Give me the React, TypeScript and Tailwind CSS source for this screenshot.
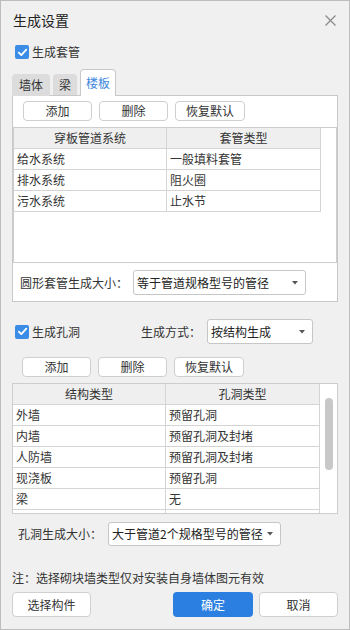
import React from "react";

const font = { fontFamily: '"Noto Sans CJK SC", "Noto Sans", sans-serif' };

function Check() {
  return (
    <span className="flex h-[14px] w-[14px] items-center justify-center rounded-[2px] bg-[#3a8ce6]">
      <svg width="11" height="11" viewBox="0 0 11 11">
        <path d="M1.8 5.6 L4.3 8.1 L9.3 2.6" fill="none" stroke="#fff" strokeWidth="1.8" strokeLinecap="round" strokeLinejoin="round" />
      </svg>
    </span>
  );
}

function Btn({ children, className = "" }: { children: React.ReactNode; className?: string }) {
  return (
    <div className={"flex items-center justify-center rounded-[4px] border border-[#cfcfcf] bg-white text-[12px] leading-none text-[#333] " + className}>
      {children}
    </div>
  );
}

function Select({ text, className = "" }: { text: string; className?: string }) {
  return (
    <div className={"flex items-center justify-between rounded-[3px] border border-[#c6c6c6] bg-white pl-[3px] pr-[7px] text-[12px] leading-none text-[#222] " + className}>
      <span>{text}</span>
      <svg width="6" height="4" viewBox="0 0 6 4">
        <path d="M0 0 L6 0 L3 3.5 Z" fill="#555" />
      </svg>
    </div>
  );
}

function Row({ a, b, header = false }: { a: string; b: string; header?: boolean }) {
  return (
    <div className={"flex h-[21px] border-b border-[#d4d4d4] text-[12px] leading-none text-[#333] " + (header ? "bg-[#efefef]" : "bg-white")}>
      <div className={"flex w-[153px] items-center border-r border-[#d4d4d4] " + (header ? "justify-center" : "pl-[3px]")}>{a}</div>
      <div className={"flex flex-1 items-center border-r border-[#d4d4d4] " + (header ? "justify-center" : "pl-[3px]")}>{b}</div>
    </div>
  );
}

export default function App() {
  return (
    <div style={font} className="box-border flex h-[630px] w-[350px] flex-col border border-[#bdbdbd] bg-[#f0f0f0] px-[11px] text-[#333]">
      {/* header */}
      <div className="flex h-[38px] items-center justify-between">
        <span className="pl-[1px] text-[14px] leading-none text-[#222]">生成设置</span>
        <svg width="11" height="11" viewBox="0 0 11 11" className="mr-[2px]">
          <path d="M0.5 0.5 L10.5 10.5 M10.5 0.5 L0.5 10.5" stroke="#8a8a8a" strokeWidth="1.3" />
        </svg>
      </div>
      {/* checkbox 1 */}
      <div className="flex h-[26px] items-center gap-[3px] pl-[3px]">
        <Check />
        <span className="text-[12px] leading-none">生成套管</span>
      </div>
      {/* tabs */}
      <div className="relative z-10 mt-[4px] flex h-[27px] items-end gap-[3px]">
        <div className="flex h-[22px] w-[38px] items-center justify-center rounded-t-[4px] bg-[#dcdcdc] text-[12px] leading-none">墙体</div>
        <div className="mb-px flex h-[21px] w-[24px] items-center justify-center rounded-t-[4px] bg-[#dcdcdc] text-[12px] leading-none">梁</div>
        <div className="flex h-[27px] w-[36px] items-center justify-center rounded-t-[4px] border border-b-0 border-[#c8c8c8] bg-white pb-[1px] text-[12px] leading-none text-[#3b87dd]">楼板</div>
      </div>
      {/* panel */}
      <div className="-mt-px flex h-[207px] flex-col border border-[#c8c8c8] bg-white">
        <div className="mt-[5px] flex gap-[7px] pl-[10px]">
          <Btn className="h-[20px] w-[69px]">添加</Btn>
          <Btn className="h-[20px] w-[69px]">删除</Btn>
          <Btn className="h-[20px] w-[70px]">恢复默认</Btn>
        </div>
        <div className="mt-[6px] h-[136px] border border-[#cdcdcd] bg-white">
          <div className="w-[307px]">
            <Row a="穿板管道系统" b="套管类型" header />
            <Row a="给水系统" b="一般填料套管" />
            <Row a="排水系统" b="阻火圈" />
            <Row a="污水系统" b="止水节" />
          </div>
        </div>
        <div className="mt-[7px] flex h-[25px] items-center pl-[7px]">
          <span className="w-[113px] text-[12px] leading-none">圆形套管生成大小：</span>
          <Select text="等于管道规格型号的管径" className="h-[25px] w-[173px]" />
        </div>
      </div>
      {/* checkbox 2 */}
      <div className="mt-[17px] flex h-[25px] items-center">
        <div className="flex items-center gap-[3px] pl-[3px]">
          <Check />
          <span className="text-[12px] leading-none">生成孔洞</span>
        </div>
        <span className="ml-[61px] w-[66px] text-[12px] leading-none">生成方式：</span>
        <Select text="按结构生成" className="h-[25px] w-[106px]" />
      </div>
      {/* buttons 2 */}
      <div className="mt-[13px] flex gap-[7px] pl-[10px]">
        <Btn className="h-[20px] w-[69px]">添加</Btn>
        <Btn className="h-[20px] w-[69px]">删除</Btn>
        <Btn className="h-[20px] w-[70px]">恢复默认</Btn>
      </div>
      {/* table 2 */}
      <div className="mt-[6px] flex h-[131px] w-[326px] overflow-hidden border border-[#cdcdcd] bg-white">
        <div className="w-[307px] overflow-hidden">
          <Row a="结构类型" b="孔洞类型" header />
          <Row a="外墙" b="预留孔洞" />
          <Row a="内墙" b="预留孔洞及封堵" />
          <Row a="人防墙" b="预留孔洞及封堵" />
          <Row a="现浇板" b="预留孔洞" />
          <Row a="梁" b="无" />
          <Row a="" b="" />
        </div>
        <div className="flex flex-1 justify-center pt-[14px]">
          <div className="h-[72px] w-[8px] rounded-full bg-[#c8c8c8]" />
        </div>
      </div>
      {/* hole size */}
      <div className="mt-[8px] flex h-[24px] items-center pl-[6px]">
        <span className="w-[90px] text-[12px] leading-none">孔洞生成大小：</span>
        <Select text="大于管道2个规格型号的管径" className="h-[24px] w-[173px]" />
      </div>
      {/* note */}
      <div className="mt-[23px] flex h-[18px] items-center text-[12px] leading-none">注：选择砌块墙类型仅对安装自身墙体图元有效</div>
      {/* bottom buttons */}
      <div className="mt-[5px] flex h-[25px] gap-[6px]">
        <Btn className="h-[25px] w-[79px]">选择构件</Btn>
        <div className="flex-1" />
        <div className="flex h-[25px] w-[80px] items-center justify-center rounded-[4px] bg-[#2b7fe0] text-[12px] leading-none text-white">确定</div>
        <Btn className="h-[25px] w-[79px]">取消</Btn>
      </div>
    </div>
  );
}
